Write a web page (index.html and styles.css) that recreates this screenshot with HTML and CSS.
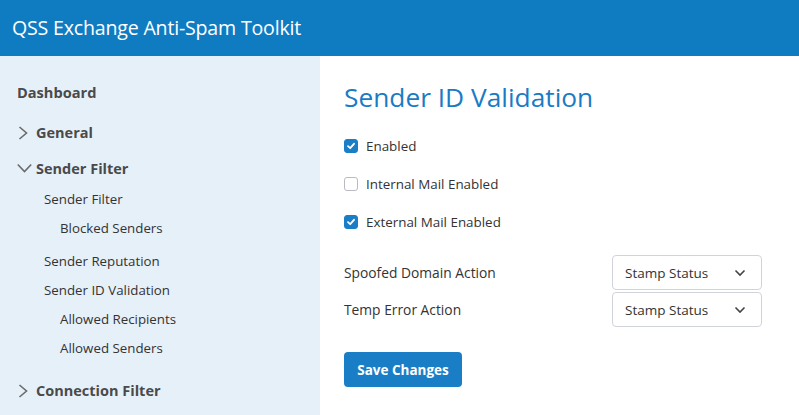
FILE: index.html
```html
<!DOCTYPE html>
<html lang="en">
<head>
<meta charset="utf-8">
<title>QSS Exchange Anti-Spam Toolkit</title>
<link rel="stylesheet" href="styles.css">
</head>
<body>
<header class="topbar">QSS Exchange Anti-Spam Toolkit</header>
<div class="layout">
  <nav class="sidebar">
    <div class="nav-top">Dashboard</div>
    <div class="nav-group nav-general">
      <span class="chev"><svg width="16" height="16" viewBox="0 0 16 16"><path d="M2.5 2 L9.5 8 L2.5 14" fill="none" stroke="#6b6b6b" stroke-width="1.6"/></svg></span>
      <span>General</span>
    </div>
    <div class="nav-group nav-sender">
      <span class="chev"><svg width="16" height="16" viewBox="0 0 16 16"><path d="M0.8 3.5 L7.5 10.5 L14.2 3.5" fill="none" stroke="#6b6b6b" stroke-width="1.6"/></svg></span>
      <span>Sender Filter</span>
    </div>
    <ul class="sub">
      <li>Sender Filter
        <ul class="sub2"><li>Blocked Senders</li></ul>
      </li>
      <li>Sender Reputation</li>
      <li>Sender ID Validation
        <ul class="sub2"><li>Allowed Recipients</li><li>Allowed Senders</li></ul>
      </li>
    </ul>
    <div class="nav-group nav-conn">
      <span class="chev"><svg width="16" height="16" viewBox="0 0 16 16"><path d="M2.5 2 L9.5 8 L2.5 14" fill="none" stroke="#6b6b6b" stroke-width="1.6"/></svg></span>
      <span>Connection Filter</span>
    </div>
  </nav>
  <main class="content">
    <h1 class="title">Sender ID Validation</h1>
    <div class="checks">
      <label class="check"><span class="box on"><svg width="10" height="10" viewBox="0 0 10 10"><path d="M2 5.2 L4.2 7.2 L8 2.8" fill="none" stroke="#fff" stroke-width="1.8" stroke-linecap="round" stroke-linejoin="round"/></svg></span>Enabled</label>
      <label class="check"><span class="box"></span>Internal Mail Enabled</label>
      <label class="check"><span class="box on"><svg width="10" height="10" viewBox="0 0 10 10"><path d="M2 5.2 L4.2 7.2 L8 2.8" fill="none" stroke="#fff" stroke-width="1.8" stroke-linecap="round" stroke-linejoin="round"/></svg></span>External Mail Enabled</label>
    </div>
    <div class="fields">
      <span class="field-label">Spoofed Domain Action</span>
      <div class="select"><span>Stamp Status</span><svg width="12" height="8" viewBox="0 0 12 8"><path d="M1.5 1.5 L6 6 L10.5 1.5" fill="none" stroke="#444" stroke-width="1.6"/></svg></div>
      <span class="field-label">Temp Error Action</span>
      <div class="select"><span>Stamp Status</span><svg width="12" height="8" viewBox="0 0 12 8"><path d="M1.5 1.5 L6 6 L10.5 1.5" fill="none" stroke="#444" stroke-width="1.6"/></svg></div>
    </div>
    <button class="save" type="button">Save Changes</button>
  </main>
</div>
</body>
</html>
```
FILE: styles.css
```css
* { box-sizing: border-box; }
html, body { margin: 0; padding: 0; }
body {
  font-family: "Open Sans", "Noto Sans", sans-serif;
  color: #333;
  background: #fff;
}
.topbar {
  height: 56px;
  background: #0f7cc2;
  color: #fff;
  font-size: 19.6px;
  line-height: 56px;
  padding-left: 12px;
  letter-spacing: -0.2px;
}
.layout {
  display: flex;
  min-height: calc(100vh - 56px);
}
.sidebar {
  width: 320px;
  flex: none;
  background: #e6f0f9;
  padding: 26px 0 0 17px;
  color: #4a4a4a;
}
.nav-top {
  font-size: 14.6px;
  font-weight: 700;
  line-height: 20px;
}
.nav-group {
  display: flex;
  align-items: center;
  gap: 3px;
  font-size: 14.5px;
  font-weight: 700;
  line-height: 20px;
}
.chev { display: flex; width: 16px; height: 16px; }
.nav-general { margin-top: 21px; }
.nav-sender { margin-top: 16px; }
.nav-conn { margin-top: 18px; }
.sub, .sub2 {
  list-style: none;
  margin: 0;
  padding: 0;
}
.sub {
  margin-top: 6px;
  padding-left: 27px;
  font-size: 13.3px;
  line-height: 29px;
  color: #333;
}
.sub2 {
  padding-left: 16px;
  margin-bottom: 4px;
}
.content {
  flex: 1;
  padding: 25px 24px;
}
.title {
  margin: 0;
  font-size: 26.3px;
  font-weight: 400;
  line-height: 32px;
  color: #1a7bc4;
}
.checks {
  margin-top: 23px;
  display: flex;
  flex-direction: column;
  gap: 18px;
}
.check {
  display: flex;
  align-items: center;
  gap: 8px;
  font-size: 13.4px;
  line-height: 20px;
}
.box {
  width: 14px;
  height: 14px;
  border: 1px solid #b8bcc2;
  border-radius: 3px;
  background: #fff;
  display: flex;
  align-items: center;
  justify-content: center;
}
.box.on {
  background: #1a7ec6;
  border-color: #1a7ec6;
}
.fields {
  margin-top: 23px;
  display: grid;
  grid-template-columns: 268px 150px;
  row-gap: 2px;
  align-items: center;
  font-size: 13.8px;
}
.select {
  height: 35px;
  border: 1px solid #d0d4da;
  border-radius: 4px;
  display: flex;
  align-items: center;
  justify-content: space-between;
  padding: 0 15px 0 12px;
  font-size: 13.5px;
}
.save {
  margin-top: 25px;
  width: 118px;
  height: 35px;
  border: none;
  border-radius: 4px;
  background: #1a7ec6;
  color: #fff;
  font-family: inherit;
  font-size: 13.5px;
  font-weight: 700;
  padding: 0;
}
```
